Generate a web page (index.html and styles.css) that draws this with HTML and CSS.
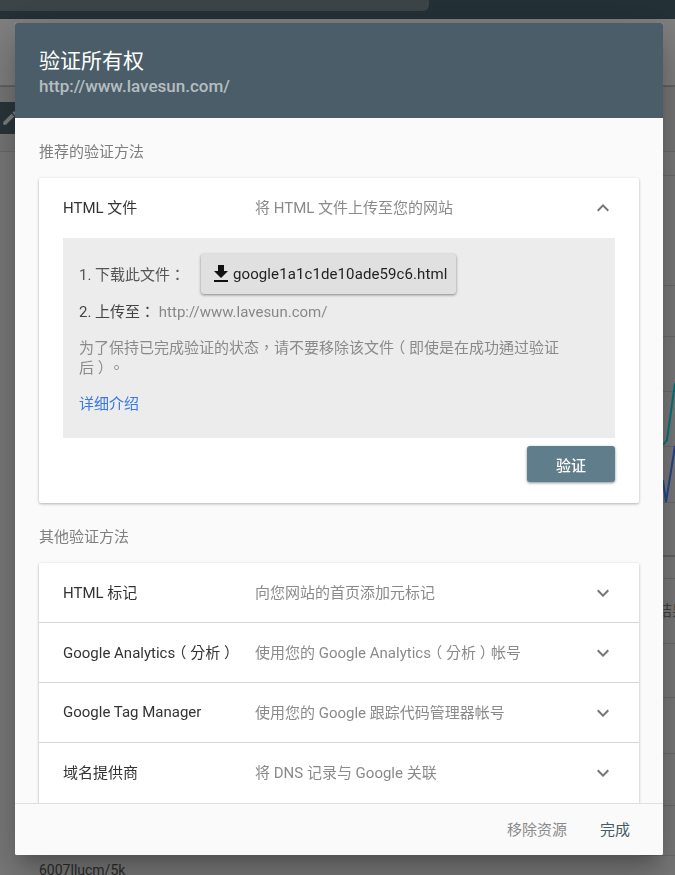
FILE: index.html
```html
<!DOCTYPE html>
<html lang="zh">
<head>
<meta charset="utf-8">
<title>验证所有权</title>
<link rel="stylesheet" href="styles.css">
</head>
<body>
<div class="backdrop">
  <div class="topbar"><div class="searchbox"></div></div>
  <div class="band-a"></div>
  <div class="band-b"></div>
  <div class="chip"><svg class="pencil" viewBox="0 0 24 24"><path d="M3 17.25V21h3.75L17.81 9.94l-3.75-3.75L3 17.25zM20.71 7.04a1 1 0 0 0 0-1.41l-2.34-2.34a1 1 0 0 0-1.41 0l-1.83 1.83 3.75 3.75 1.83-1.83z"/></svg></div>
  <i class="bgline l175"></i><i class="bgline l285"></i><i class="bgline l336"></i><i class="bgline l391"></i><i class="bgline l446"></i><i class="bgline l502"></i><i class="bgline thick l555"></i><i class="bgline l578"></i><i class="bgline l643"></i><i class="bgline l697"></i><i class="bgline l753"></i><i class="bgline l805"></i><i class="bgline l855"></i>
  <svg class="chart" viewBox="0 0 12 130"><path class="teal" d="M0 62 L4 57 L12 0"/><path class="blue" d="M0 97 L3 119 L12 63"/></svg>
  <span class="peek-right">结果</span>
  <span class="peek-bottom">6007llucm/5k</span>
</div>

<div class="dialog">
  <header class="dialog-head">
    <h1>验证所有权</h1>
    <p>http://www.lavesun.com/</p>
  </header>
  <div class="dialog-body">
    <h2 class="section-label first">推荐的验证方法</h2>
    <section class="card">
      <div class="row open">
        <span class="row-title">HTML 文件</span>
        <span class="row-desc">将 HTML 文件上传至您的网站</span>
        <svg class="chev" viewBox="0 0 24 24"><path d="M7.41 15.41 12 10.83l4.59 4.58L18 14l-6-6-6 6z"/></svg>
      </div>
      <div class="panel">
        <div class="step-one">
          <span class="step-label tc" lang="zh-Hant">1. 下载此文件：</span>
          <button class="dl-btn"><svg class="dl-icon" viewBox="0 0 24 24"><path d="M19 9h-4V3H9v6H5l7 7 7-7zM5 18v2h14v-2H5z"/></svg>google1a1c1de10ade59c6.html</button>
        </div>
        <div class="step-two tc" lang="zh-Hant">2. 上传至： <span class="url">http://www.lavesun.com/</span></div>
        <p class="note tc" lang="zh-Hant">为了保持已完成验证的状态，请不要移除该文件<span class="paren">（</span>即使是在成功通过验证后<span class="paren">）</span>。</p>
        <a class="more" href="#">详细介绍</a>
      </div>
      <div class="verify-wrap"><button class="verify">验证</button></div>
    </section>
    <h2 class="section-label">其他验证方法</h2>
    <section class="card others">
      <div class="row">
        <span class="row-title">HTML 标记</span>
        <span class="row-desc">向您网站的首页添加元标记</span>
        <svg class="chev" viewBox="0 0 24 24"><path d="M16.59 8.59 12 13.17 7.41 8.59 6 10l6 6 6-6z"/></svg>
      </div>
      <div class="row">
        <span class="row-title tc" lang="zh-Hant">Google Analytics<span class="paren">（</span>分析<span class="paren">）</span></span>
        <span class="row-desc tc" lang="zh-Hant">使用您的 Google Analytics<span class="paren">（</span>分析<span class="paren">）</span>帐号</span>
        <svg class="chev" viewBox="0 0 24 24"><path d="M16.59 8.59 12 13.17 7.41 8.59 6 10l6 6 6-6z"/></svg>
      </div>
      <div class="row">
        <span class="row-title">Google Tag Manager</span>
        <span class="row-desc">使用您的 Google 跟踪代码管理器帐号</span>
        <svg class="chev" viewBox="0 0 24 24"><path d="M16.59 8.59 12 13.17 7.41 8.59 6 10l6 6 6-6z"/></svg>
      </div>
      <div class="row">
        <span class="row-title">域名提供商</span>
        <span class="row-desc">将 DNS 记录与 Google 关联</span>
        <svg class="chev" viewBox="0 0 24 24"><path d="M16.59 8.59 12 13.17 7.41 8.59 6 10l6 6 6-6z"/></svg>
      </div>
    </section>
  </div>
  <footer class="dialog-foot">
    <button class="foot-btn muted">移除资源</button>
    <button class="foot-btn done">完成</button>
  </footer>
</div>
</body>
</html>
```
FILE: styles.css
```css
* { box-sizing: border-box; }
html, body { margin: 0; height: 875px; overflow: hidden; }
body {
  background: #7d7d7d;
  font-family: Roboto, "Noto Sans CJK SC", sans-serif;
  font-size: 15px;
  color: #333;
  padding: 23px 12px 20px 15px;
}
.tc { font-family: Roboto, "Noto Sans CJK TC", sans-serif; }
.paren { font-feature-settings: "halt"; padding: 0 3.75px; }
.backdrop { position: fixed; inset: 0; overflow: hidden; background: #7a7a7a; }
.topbar { height: 19px; background: #243137; }
.searchbox { width: 429px; height: 11px; background: #3c4548; border-bottom-right-radius: 6px; }
.band-a { position: absolute; left: 0; right: 0; top: 19px; height: 67px; background: #808080; border-bottom: 1px solid #666; box-shadow: 0 1px 2px rgba(0,0,0,.3); }
.band-b { position: absolute; left: 0; right: 0; top: 87px; height: 65px; background: #777; border-bottom: 1px solid #6b6b6b; }
.chip { position: absolute; left: 0; top: 102px; width: 20px; height: 32px; background: #2a363c; border-radius: 0 6px 6px 0; }
.pencil { position: absolute; left: 1px; top: 7px; width: 18px; height: 18px; fill: #7f7f7f; }
.bgline { position: absolute; left: 640px; right: 0; height: 1px; background: #6b6b6b; }
.bgline.thick { height: 2px; background: #636363; }
.l175 { top: 175px; } .l285 { top: 285px; } .l336 { top: 336px; }
.l391 { top: 391px; } .l446 { top: 446px; } .l502 { top: 502px; } .l555 { top: 555px; }
.l578 { top: 578px; } .l643 { top: 643px; } .l697 { top: 697px; } .l753 { top: 753px; }
.l805 { top: 805px; } .l855 { top: 855px; }
.chart { position: absolute; left: 663px; top: 383px; width: 12px; height: 130px; fill: none; stroke-width: 2; }
.teal { stroke: #00767f; }
.blue { stroke: #23478f; }
.peek-right { position: absolute; left: 657px; top: 599px; font-size: 15px; color: #444; white-space: nowrap; }
.peek-bottom { position: absolute; left: 39px; top: 862px; font-size: 14px; color: #2b2b2b; }

.dialog {
  position: relative;
  width: 648px;
  height: 832px;
  display: flex;
  flex-direction: column;
  background: #fafafa;
  border-radius: 2px;
  overflow: hidden;
  box-shadow: 0 11px 15px -7px rgba(0,0,0,.2), 0 24px 38px 3px rgba(0,0,0,.14), 0 9px 46px 8px rgba(0,0,0,.12);
}
.dialog-head { height: 95px; background: #4a5d68; padding: 24px 24px 0; flex: none; }
.dialog-head h1 { margin: 0; font-size: 21px; line-height: 28px; font-weight: 400; color: #fff; }
.dialog-head p { margin: 0; font-size: 17px; line-height: 22px; font-weight: 500; color: rgba(255,255,255,.6); }
.dialog-body { flex: 1; min-height: 0; overflow: hidden; padding: 0 24px; }
.section-label { margin: 0; font-size: 15px; line-height: 20px; font-weight: 400; color: #7f7f7f; padding: 24px 0 16px; }
.card { background: #fff; border-radius: 2px; box-shadow: 0 1px 3px rgba(0,0,0,.3); }
.card.others { padding-bottom: 16px; }
.row { display: flex; align-items: center; height: 60px; padding: 0 24px; border-top: 1px solid #d6d6d6; }
.row:first-child { border-top: 0; height: 59px; }
.row-title { width: 192px; flex: none; color: #333; white-space: nowrap; padding-bottom: 2px; }
.row-desc { flex: 1; color: #8a8a8a; white-space: nowrap; padding-bottom: 2px; }
.chev { width: 24px; height: 24px; fill: #757575; flex: none; }
.panel { margin: 1px 24px 0; height: 200px; background: #ececec; padding: 16px 16px 0; color: #555; }
.step-one { display: flex; align-items: center; height: 40px; }
.step-label { width: 122px; flex: none; padding-bottom: 2px; }
.dl-btn {
  width: 255px; height: 40px; display: flex; align-items: center; padding: 0 0 0 8px;
  border: 0; border-radius: 3px; background: #e0e0e0;
  box-shadow: 0 1px 3px rgba(0,0,0,.45);
  font: 15px Roboto, "Noto Sans CJK SC", sans-serif; letter-spacing: .1px; color: #222; white-space: nowrap;
}
.dl-icon { width: 24px; height: 24px; fill: #111; flex: none; }
.step-two { margin-top: 8px; height: 20px; line-height: 20px; color: #444; }
.url { color: #888; }
.note { margin: 16px 24px 0 0; line-height: 20px; color: #8a8a8a; }
.more { display: block; margin-top: 16px; line-height: 20px; color: #3b78e7; text-decoration: none; }
.verify-wrap { display: flex; justify-content: flex-end; padding: 8px 24px 21px; }
.verify {
  width: 88px; height: 36px; border: 0; border-radius: 3px; background: #607d8b; color: #fff;
  font: 500 15px Roboto, "Noto Sans CJK SC", sans-serif;
  box-shadow: 0 1px 3px rgba(0,0,0,.45);
}
.dialog-foot { flex: none; height: 52px; background: #fafafa; border-top: 1px solid #e0e0e0; display: flex; justify-content: flex-end; align-items: center; gap: 33px; padding: 0 33px 0 0; }
.foot-btn { border: 0; background: none; padding: 0 0 2px; font: 15px Roboto, "Noto Sans CJK SC", sans-serif; }
.muted { color: #8a8a8a; }
.done { color: #455a64; }
```
